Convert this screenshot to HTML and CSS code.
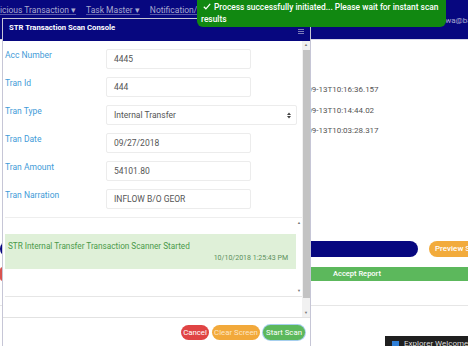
FILE: index.html
```html
<!DOCTYPE html>
<html lang="en">
<head>
  <meta charset="UTF-8" />
  <title>STR Transaction Scan Console</title>
  <link rel="stylesheet" href="styles.css">
</head>
<body>

  <div class="topnav">
    <a class="nav-link first">Suspicious Transaction &#9662;</a>
    <a class="nav-link">Task Master &#9662;</a>
    <a class="nav-link">Notification/s &#9662;</a>
    <span class="nav-user">wa@bank.com</span>
  </div>

  <div class="page">
    <div class="times">
      <div class="time-row">2018-09-13T10:16:36.157</div>
      <div class="time-row">2018-09-13T10:14:44.02</div>
      <div class="time-row">2018-09-13T10:03:28.317</div>
    </div>

    <div class="actions">
      <div class="pill pill-navy"></div>
      <div class="pill pill-orange">Preview Scan</div>
    </div>

    <div class="accept-row">
      <div class="bar-red"></div>
      <div class="bar-green">Accept Report</div>
    </div>

    <div class="page-rule"></div>
  </div>

  <div class="modal">
    <div class="modal-header">
      <span class="modal-title">STR Transaction Scan Console</span>
      <svg class="modal-menu" width="6" height="5" viewBox="0 0 6 5">
        <path d="M0 0.5h6M0 2.5h6M0 4.5h6" stroke="#7c7cb8" stroke-width="1"/>
      </svg>
    </div>

    <div class="modal-body">
      <div class="scroll-area">
        <div class="form-row">
          <label class="field-label">Acc Number</label>
          <div class="field">4445</div>
        </div>
        <div class="form-row">
          <label class="field-label">Tran Id</label>
          <div class="field">444</div>
        </div>
        <div class="form-row">
          <label class="field-label">Tran Type</label>
          <div class="field field-select">
            Internal Transfer
            <svg width="4" height="7" viewBox="0 0 4 7">
              <path d="M0 3L2 0.5L4 3Z M0 4L2 6.5L4 4Z" fill="#444"/>
            </svg>
          </div>
        </div>
        <div class="form-row">
          <label class="field-label">Tran Date</label>
          <div class="field">09/27/2018</div>
        </div>
        <div class="form-row">
          <label class="field-label">Tran Amount</label>
          <div class="field">54101.80</div>
        </div>
        <div class="form-row">
          <label class="field-label">Tran Narration</label>
          <div class="field">INFLOW B/O GEOR</div>
        </div>

        <div class="log-box">
          <div class="log-list">
            <div class="log-msg">
              <div class="log-text">STR Internal Transfer Transaction Scanner Started</div>
              <div class="log-time">10/10/2018 1:25:43 PM</div>
            </div>
          </div>
          <div class="log-scroll">
            <span class="arrow">&#9650;</span>
            <span class="arrow">&#9660;</span>
          </div>
        </div>
      </div>

      <div class="vscroll">
        <span class="arrow">&#9650;</span>
        <div class="thumb"></div>
        <span class="arrow">&#9660;</span>
      </div>
    </div>

    <div class="modal-footer">
      <button class="btn btn-cancel">Cancel</button>
      <button class="btn btn-clear">Clear Screen</button>
      <button class="btn btn-start">Start Scan</button>
    </div>
  </div>

  <div class="toast">
    <svg class="tick" width="8" height="7" viewBox="0 0 8 7">
      <path d="M0.8 3.8L2.9 5.8L7.2 0.8" fill="none" stroke="#fff" stroke-width="1.2"/>
    </svg>Process successfully initiated... Please wait for instant scan<br>results
  </div>

  <div class="tip">
    <span class="tip-icon"></span>
    <span>Explorer Welcome</span>
  </div>

</body>
</html>
```

FILE: styles.css
```css
body {
  font-family: Roboto, 'Liberation Sans', sans-serif;
  background: #fff;
  margin: 0;
  width: 468px;
  height: 346px;
  overflow: hidden;
  position: relative;
}

.topnav {
  height: 40px;
  background: #07077f;
  display: flex;
  align-items: flex-start;
  padding-top: 5px;
  box-sizing: border-box;
  border-bottom: 1px solid #d8d8e8;
  white-space: nowrap;
  overflow: hidden;
}

.nav-link {
  color: #a9a9cf;
  font-size: 8.5px;
  line-height: 10px;
  margin-right: 10px;
  text-decoration: underline;
  text-decoration-color: rgba(170, 170, 210, 0.5);
}

.nav-link.first {
  margin-left: -19px;
}

.nav-user {
  margin-left: auto;
  margin-right: -30px;
  color: #a9a9cf;
  font-size: 8px;
  padding-top: 11px;
}

.times {
  padding: 50px 0 0 287px;
}

.time-row {
  height: 20.5px;
  line-height: 20.5px;
  font-size: 8px;
  color: #555;
  margin-top: -10px;
  margin-bottom: 10px;
}

.actions {
  display: flex;
  gap: 11px;
  margin-top: 99px;
  white-space: nowrap;
}

.pill {
  height: 16px;
  border-radius: 8px;
  flex-shrink: 0;
}

.pill-navy {
  width: 418px;
  background: #07077f;
}

.pill-orange {
  width: 70px;
  background: #f2ab3c;
  color: #fff;
  font-size: 8px;
  font-weight: 500;
  line-height: 16px;
  padding-left: 6px;
  box-sizing: border-box;
}

.accept-row {
  display: flex;
  margin-top: 10px;
  height: 14px;
}

.bar-red {
  width: 60px;
  background: #d9534f;
  border-radius: 3px;
}

.bar-green {
  flex: 1;
  background: #5cb85c;
  color: #fff;
  font-size: 7.5px;
  font-weight: 500;
  line-height: 14px;
  padding-left: 273px;
}

.page-rule {
  margin-top: 24px;
  border-top: 1px solid #e6e6e6;
}

/* modal */
.modal {
  position: absolute;
  left: 2px;
  top: 18px;
  width: 309px;
  height: 340px;
  background: #fff;
  border: 1px solid #c6c6d6;
  box-sizing: border-box;
}

.modal-header {
  height: 22px;
  background: #07077f;
  display: flex;
  align-items: flex-start;
  justify-content: space-between;
  padding: 4px 6px 0 6px;
  box-sizing: border-box;
}

.modal-title {
  color: #fff;
  font-size: 7.7px;
  font-weight: 700;
  line-height: 10px;
}

.modal-menu {
  margin-top: 6px;
}

.modal-body {
  display: flex;
  height: 276px;
  border-bottom: 1px solid #e2e2e2;
}

.scroll-area {
  flex: 1;
  padding: 8px 0 0 2px;
}

.form-row {
  display: flex;
  align-items: flex-start;
  height: 20px;
  margin-bottom: 8px;
}

.field-label {
  width: 101px;
  color: #3f9bd8;
  font-size: 8.5px;
  line-height: 11px;
  padding-top: 1px;
}

.field {
  width: 145px;
  height: 20px;
  border: 1px solid #ececec;
  border-radius: 2px;
  box-sizing: border-box;
  padding-left: 7px;
  font-size: 8.5px;
  line-height: 18px;
  color: #555;
}

.field-select {
  width: 191px;
  display: flex;
  justify-content: space-between;
  align-items: center;
  padding-right: 5px;
}

.log-box {
  display: flex;
  height: 78px;
  border-top: 1px solid #eee;
  border-bottom: 1px solid #e6e6e6;
}

.log-list {
  flex: 1;
  padding-top: 16px;
}

.log-msg {
  background: #dff0d8;
  height: 35px;
  padding: 7px 8px 0 3px;
  box-sizing: border-box;
}

.log-text {
  color: #4a9a4a;
  font-size: 8.2px;
  line-height: 10px;
}

.log-time {
  color: #5b8f5b;
  font-size: 7px;
  line-height: 10px;
  text-align: right;
  margin-top: 2px;
}

.log-scroll {
  width: 6px;
  display: flex;
  flex-direction: column;
  justify-content: space-between;
  align-items: center;
  padding: 2px 0 3px;
}

.arrow {
  font-size: 4px;
  line-height: 5px;
  color: #777;
}

.vscroll {
  width: 8px;
  background: #f1f1f1;
  display: flex;
  flex-direction: column;
  align-items: center;
  padding: 1px 0 2px;
  box-sizing: border-box;
}

.thumb {
  width: 7px;
  flex: 1;
  background: #c3c3c3;
  margin: 3px 0 12px;
}

.modal-footer {
  display: flex;
  justify-content: flex-end;
  gap: 3px;
  padding: 7px 5px 0 0;
}

.btn {
  border: none;
  height: 15px;
  padding: 0;
  border-radius: 8px;
  color: #fff;
  font-family: Roboto, 'Liberation Sans', sans-serif;
  font-size: 7.8px;
  line-height: 15px;
  white-space: nowrap;
  text-align: center;
}

.btn-cancel {
  width: 28px;
  background: #e04444;
}

.btn-clear {
  width: 48px;
  background: #f2a93b;
  color: #fde6c4;
}

.btn-start {
  width: 42px;
  background: #5cb85c;
  box-shadow: 0 0 0 1px #a6cfee;
}

/* overlays */
.toast {
  position: absolute;
  left: 197px;
  top: 0;
  width: 249px;
  height: 27px;
  box-sizing: border-box;
  background: #118811;
  border-radius: 0 0 6px 6px;
  color: #fff;
  font-size: 8.4px;
  font-weight: 500;
  line-height: 12px;
  padding: 1px 0 0 4px;
  white-space: nowrap;
}

.tick {
  margin: 0 3px 0 2px;
}

.tip {
  position: absolute;
  left: 385px;
  top: 336px;
  width: 90px;
  height: 14px;
  background: #1f1f1f;
  color: #ddd;
  font-size: 8px;
  line-height: 12px;
  display: flex;
  gap: 5px;
  padding: 2px 0 0 7px;
  box-sizing: border-box;
  white-space: nowrap;
}

.tip-icon {
  width: 7px;
  height: 7px;
  margin-top: 3px;
  background: #2f7fd7;
}
```
